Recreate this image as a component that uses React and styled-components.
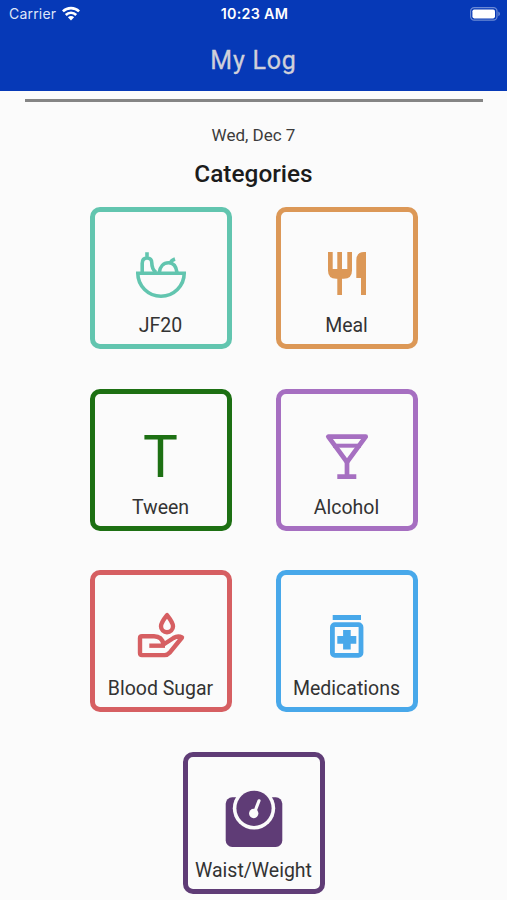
import styled, { createGlobalStyle } from 'styled-components'

const GlobalStyle = createGlobalStyle`
  * {
    box-sizing: border-box;
  }

  body {
    margin: 0;
    background: #fbfbfb;
    font-family: Roboto, 'Liberation Sans', sans-serif;
  }
`

const Screen = styled.div`
  width: 507px;
  height: 900px;
  overflow: hidden;
  display: flex;
  flex-direction: column;
  align-items: center;
`

const Header = styled.header`
  width: 100%;
  height: 91px;
  flex: none;
  background: #0639b7;
`

const StatusBar = styled.div`
  display: grid;
  grid-template-columns: 1fr auto 1fr;
  align-items: center;
  height: 28px;
  padding: 0 7px 0 9px;
  color: #fff;
  font-family: Inter, sans-serif;
  font-size: 14px;
  line-height: 28px;
`

const Carrier = styled.div`
  display: flex;
  align-items: center;
  gap: 6px;
  color: #dfe6f8;
  letter-spacing: 0.2px;
`

const Time = styled.div`
  font-weight: 600;
  font-size: 14.3px;
  letter-spacing: 0.3px;
`

const Battery = styled.svg`
  justify-self: end;
  display: block;
  margin-bottom: 1px;
`

const Title = styled.h1`
  margin: 16px 0 0;
  color: #cfd0da;
  font-size: 25px;
  line-height: 34px;
  font-weight: 400;
  letter-spacing: 0.8px;
  text-align: center;
  -webkit-text-stroke: 0.3px #cfd0da;
`

const Divider = styled.hr`
  width: 458px;
  height: 3px;
  flex: none;
  margin: 8px 0 0;
  border: 0;
  background: #858585;
`

const DateText = styled.div`
  margin-top: 22px;
  color: #3c3c3c;
  font-size: 17px;
  line-height: 22px;
`

const Heading = styled.h2`
  margin: 13px 0 0;
  color: #1c1c1c;
  font-size: 24.4px;
  line-height: 30px;
  font-weight: 500;
`

const Cards = styled.div`
  display: flex;
  flex-wrap: wrap;
  justify-content: center;
  gap: 39.6px 44px;
  width: 328px;
  margin-top: 18px;
`

const Card = styled.div`
  display: flex;
  flex-direction: column;
  align-items: center;
  width: 142px;
  height: 142px;
  padding-top: 31px;
  border: 5px solid ${props => props.$color};
  border-radius: 10px;
  color: ${props => props.$color};
`

const Icon = styled.svg`
  display: block;
  width: 64px;
  height: 64px;
  flex: none;
`

const Letter = styled.div`
  width: 64px;
  height: 64px;
  flex: none;
  font-size: 58.5px;
  line-height: 65px;
  text-align: center;
`

const Label = styled.div`
  margin-top: 7px;
  color: #333;
  font-size: 19.5px;
  line-height: 24px;
  white-space: nowrap;
`

const BowlIcon = () => (
  <Icon viewBox="0 0 64 64" fill="none" stroke="currentColor" strokeWidth="3.6">
    <path d="M8.8 30.3H55.2A23.2 22.9 0 0 1 8.8 30.3Z" />
    <path d="M13.2 29V20.5C13.2 17 14.5 15 18 15S22.8 17 22.8 20C22.8 24.5 24.5 27.5 27 29.5M18 15V9.3" />
    <path d="M30.3 29.5C31 23.5 34.5 19.8 39.5 19.8S47.2 23.5 48 29.5M41 20.5C42 18 43.5 16.8 46 16" />
  </Icon>
)

const MealIcon = () => (
  <Icon viewBox="0 0 64 64" fill="currentColor">
    <path d="M13 9H17.7V26H22.3V9H27V26H32.3V9H37V27.5Q37 35.7 28.8 35.7H27V52H22.3V35.7H21.2Q13 35.7 13 27.5Z" />
    <path d="M51 9V52H46V35H41.3V17.5Q41.3 9 49 9Z" />
  </Icon>
)

const CocktailIcon = () => (
  <Icon viewBox="0 0 64 64" fill="none" stroke="currentColor" strokeWidth="4.7" strokeLinejoin="round">
    <path d="M13.3 11.7H50.7L32 37.2Z" />
    <path d="M18 20.7H46" strokeWidth="4" />
    <path d="M32 37V51.6M22.3 51.6H41.3" />
  </Icon>
)

const BloodIcon = () => (
  <Icon viewBox="0 0 64 64" fill="none" stroke="currentColor" strokeWidth="4.4" strokeLinejoin="round">
    <path d="M38 9.2C35 13 32 17 32 20.3A6 6 0 0 0 44 20.3C44 17 41 13 38 9.2Z" />
    <path d="M13 30.3H25C30.5 30.3 33.5 33 34.5 38.5L44.5 32Q49 29.3 53 31.5L40.5 46.8Q38.5 49.1 35.5 49.1H13Q11 49.1 11 47.1V32.3Q11 30.3 13 30.3Z" />
    <path d="M20.3 39.7H36" />
  </Icon>
)

const MedicationIcon = () => (
  <Icon viewBox="0 0 64 64" fill="currentColor">
    <path d="M17.7 9H46V14H17.7Z" />
    <rect x="17.4" y="18.7" width="28.6" height="30.6" rx="2.5" fill="none" stroke="currentColor" strokeWidth="4.8" />
    <path d="M28.1 24H35.7V30H41.3V37.7H35.7V43.5H28.1V37.7H22.3V30H28.1Z" />
  </Icon>
)

const ScaleIcon = () => (
  <Icon viewBox="0 0 64 64" fill="currentColor">
    <rect x="3.7" y="9.3" width="56.6" height="49.7" rx="6.5" />
    <circle cx="32" cy="20.3" r="21.2" fill="#fbfbfb" />
    <circle cx="32" cy="20.3" r="17.6" />
    <circle cx="31.7" cy="25.5" r="4.7" fill="#fbfbfb" />
    <path d="M32.5 24.5L37 12.8" stroke="#fbfbfb" strokeWidth="3.2" strokeLinecap="round" />
  </Icon>
)

const categories = [
  { label: 'JF20', color: '#62c5af', icon: <BowlIcon /> },
  { label: 'Meal', color: '#dc9857', icon: <MealIcon /> },
  { label: 'Tween', color: '#1d7013', icon: <Letter>T</Letter> },
  { label: 'Alcohol', color: '#a66fc1', icon: <CocktailIcon /> },
  { label: 'Blood Sugar', color: '#d65f62', icon: <BloodIcon /> },
  { label: 'Medications', color: '#48a8ea', icon: <MedicationIcon /> },
  { label: 'Waist/Weight', color: '#5f3c76', icon: <ScaleIcon /> },
]

const App = () => (
  <>
    <GlobalStyle />
    <Screen>
      <Header>
        <StatusBar>
          <Carrier>
            Carrier
            <svg width="18" height="16" viewBox="0 0 18 16" fill="none" stroke="#fff" strokeWidth="2.6">
              <path d="M0.9 5.4A11.6 11.6 0 0 1 17.1 5.4" />
              <path d="M3.8 9A7.3 7.3 0 0 1 14.2 9" />
              <path d="M9 14.4L5.9 11.3A4.3 4.3 0 0 1 12.1 11.3Z" fill="#fff" stroke="none" />
            </svg>
          </Carrier>
          <Time>10:23 AM</Time>
          <Battery width="30" height="14" viewBox="0 0 30 14">
            <rect x="0.6" y="0.6" width="26.4" height="12.6" rx="3.6" fill="none" stroke="#6b8ad5" strokeWidth="1.2" />
            <rect x="2.4" y="2.4" width="22.6" height="9" rx="1.8" fill="#fff" />
            <path d="M28.3 4.6Q30 5.4 30 6.9T28.3 9.2Z" fill="#6b8ad5" />
          </Battery>
        </StatusBar>
        <Title>My Log</Title>
      </Header>
      <Divider />
      <DateText>Wed, Dec 7</DateText>
      <Heading>Categories</Heading>
      <Cards>
        {categories.map(item => (
          <Card key={item.label} $color={item.color}>
            {item.icon}
            <Label>{item.label}</Label>
          </Card>
        ))}
      </Cards>
    </Screen>
  </>
)

export default App
